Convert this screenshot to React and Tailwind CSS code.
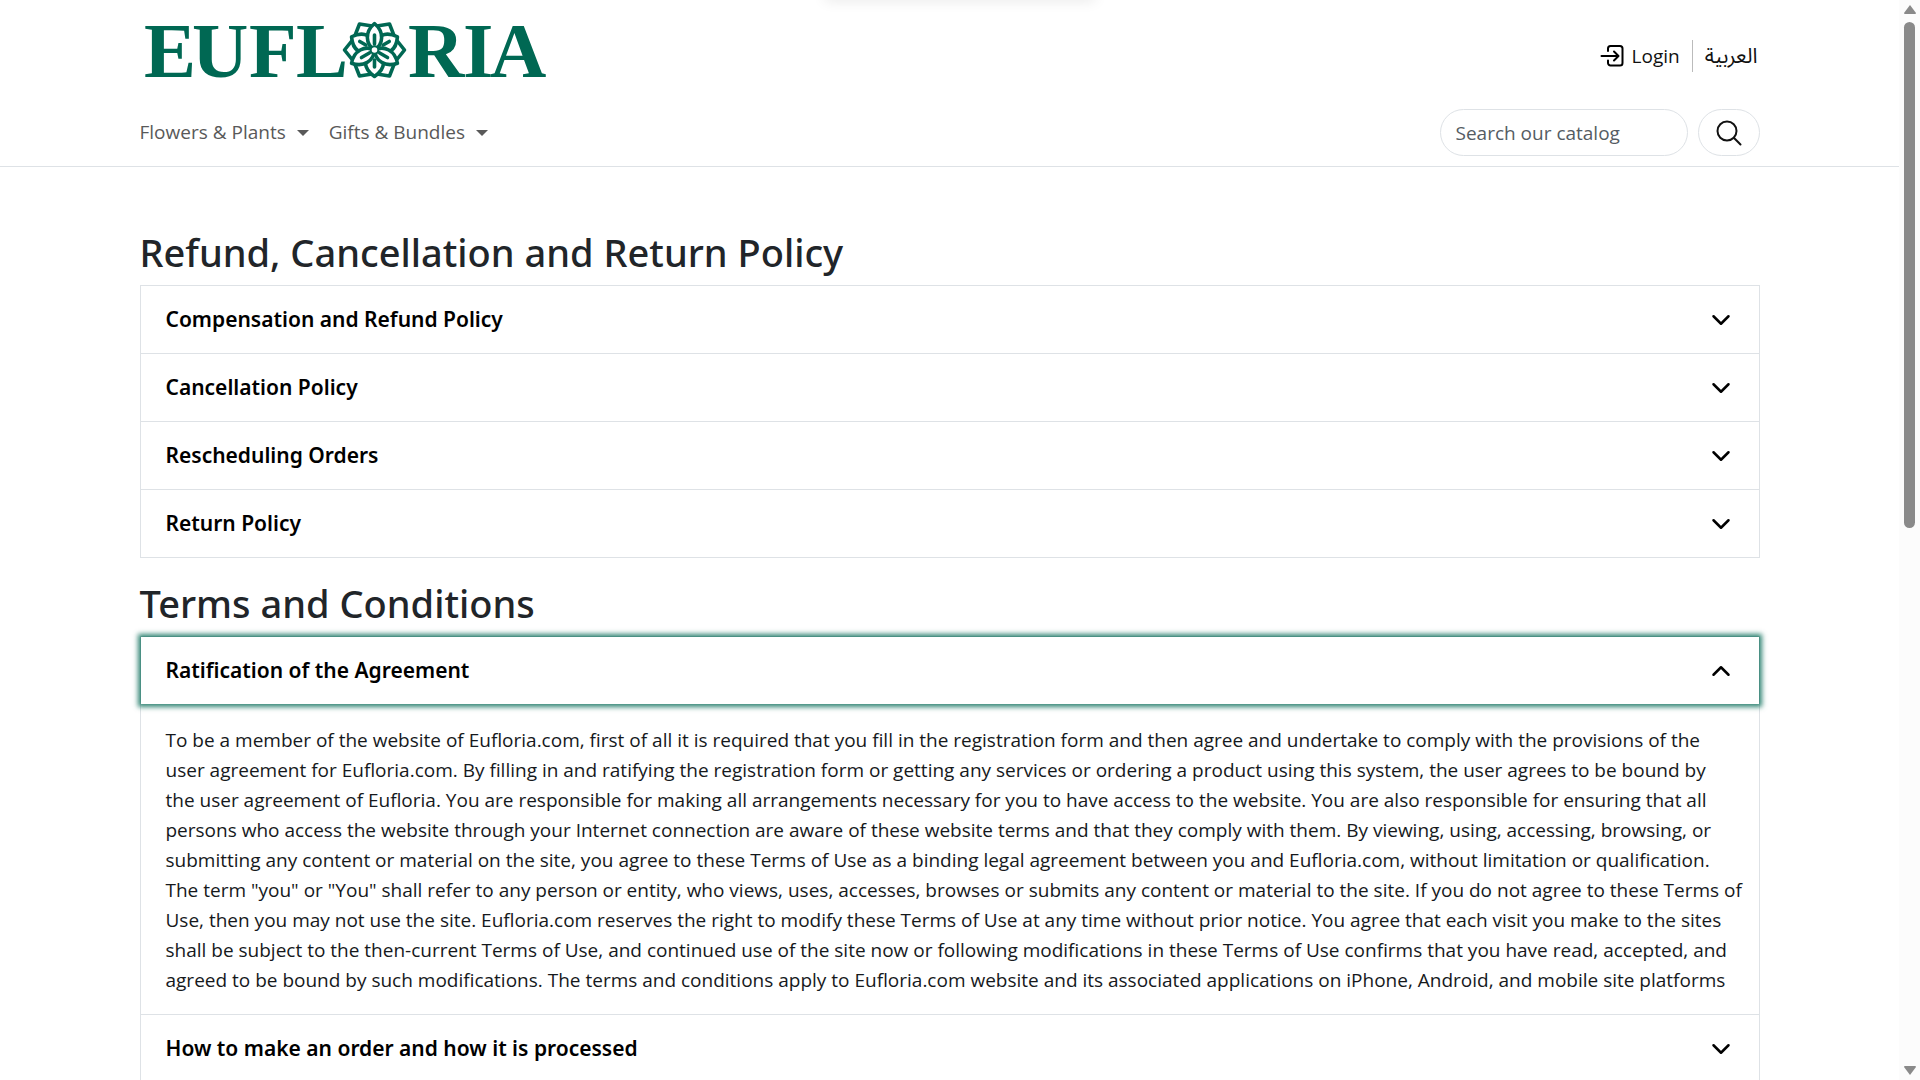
import { useState } from "react";

const refundItems = [
  "Compensation and Refund Policy",
  "Cancellation Policy",
  "Rescheduling Orders",
  "Return Policy",
];

const agreementLines = [
  "To be a member of the website of Eufloria.com, first of all it is required that you fill in the registration form and then agree and undertake to comply with the provisions of the",
  "user agreement for Eufloria.com. By filling in and ratifying the registration form or getting any services or ordering a product using this system, the user agrees to be bound by",
  "the user agreement of Eufloria. You are responsible for making all arrangements necessary for you to have access to the website. You are also responsible for ensuring that all",
  "persons who access the website through your Internet connection are aware of these website terms and that they comply with them. By viewing, using, accessing, browsing, or",
  "submitting any content or material on the site, you agree to these Terms of Use as a binding legal agreement between you and Eufloria.com, without limitation or qualification.",
  'The term "you" or "You" shall refer to any person or entity, who views, uses, accesses, browses or submits any content or material to the site. If you do not agree to these Terms of',
  "Use, then you may not use the site. Eufloria.com reserves the right to modify these Terms of Use at any time without prior notice. You agree that each visit you make to the sites",
  "shall be subject to the then-current Terms of Use, and continued use of the site now or following modifications in these Terms of Use confirms that you have read, accepted, and",
  "agreed to be bound by such modifications. The terms and conditions apply to Eufloria.com website and its associated applications on iPhone, Android, and mobile site platforms",
];

function Flower() {
  return (
    <g transform="translate(234.5 38)" stroke="#006853" strokeWidth="3.6" strokeLinejoin="round" strokeLinecap="round" fill="#fff">
      {[0, 60, 120, 180, 240, 300].map((a) => (
        <path key={a} transform={`rotate(${a})`} d="M30 0L22 -10Q16 -6 13 0Q16 6 22 10Z" />
      ))}
      {[90, 210, 330].map((a) => (
        <g key={a} transform={`rotate(${a})`}>
          <path d="M0 0C8 -13 19 -11 26.500 0C19 11 8 13 0 0Z" />
          <path d="M10 0H17" />
        </g>
      ))}
      {[30, 150, 270].map((a) => (
        <g key={a} transform={`rotate(${a})`}>
          <path d="M0 0C6 -9 18 -10 26.500 0C18 10 6 9 0 0Z" />
          <path d="M6 0H15" />
        </g>
      ))}
      <circle r="3.800" strokeWidth="2" />
    </g>
  );
}

function Logo() {
  return (
    <svg viewBox="0 0 406 88" className="h-[88px] w-[406px]" role="img" aria-label="Eufloria">
      <g fill="#006853" fontFamily="'Liberation Serif', serif" fontSize="78" fontWeight="700">
        <text x="4 52 109 156" y="65">EUFL</text>
        <text x="268 323 350" y="65">RIA</text>
      </g>
      <Flower />
    </svg>
  );
}

function Chevron({ open }) {
  return (
    <svg viewBox="0 0 16 16" className={open ? "size-5 rotate-180" : "size-5"} fill="none" stroke="#000" strokeWidth="2" strokeLinecap="round" strokeLinejoin="round" aria-hidden="true">
      <path d="m2 5 6 6 6-6" />
    </svg>
  );
}

function NavMenu({ label }) {
  return (
    <button type="button" className="flex items-center gap-[11px] text-[#595959]">
      {label}
      <svg viewBox="0 0 12 6" className="h-[6px] w-[12px]" fill="currentColor" aria-hidden="true">
        <path d="M0 0H12L6 6Z" />
      </svg>
    </button>
  );
}

function Item({ title, open, focused, onToggle, children }) {
  return (
    <div className="border border-t-0 border-[#dee2e6] first:border-t">
      <h3>
        <button
          type="button"
          aria-expanded={open}
          onClick={onToggle}
          className={
            "flex h-[67px] w-full items-center justify-between bg-white pr-7 pl-[25px] text-left font-['Noto_Sans',sans-serif] text-[21px] font-semibold text-black outline-none" +
            (focused ? " relative shadow-[0_0_5px_3px_#006853cc]" : "")
          }
        >
          {title}
          <Chevron open={open} />
        </button>
      </h3>
      {open && children}
    </div>
  );
}

function Agreement() {
  return (
    <p className="pt-[21px] pb-[19px] pl-[25px] leading-[30px] text-[#16191c]">
      {agreementLines.map((line) => (
        <span key={line} className="block">{line}</span>
      ))}
    </p>
  );
}

function Heading({ children }) {
  return (
    <h2 className="mb-[10px] font-['Noto_Sans',sans-serif] text-[38px] leading-[46px] font-medium text-[#212529]">{children}</h2>
  );
}

export default function App() {
  const [opened, setOpened] = useState("Ratification of the Agreement");
  const toggle = (title) => setOpened(opened === title ? "" : title);

  return (
    <div className="flex h-screen overflow-hidden bg-white font-['Open_Sans',sans-serif] text-[19px]">
      <div className="relative min-w-0 flex-1 overflow-hidden">
        <div className="absolute -top-2 left-1/2 ml-[10px] h-2 w-[270px] -translate-x-1/2 shadow-[0_0_14px_rgba(0,0,0,0.12)]" />
        <header className="border-b border-[#dee2e6]">
          <div className="mx-auto max-w-[1652px] px-4 pt-3 pb-[10px]">
            <div className="flex items-center justify-between">
              <a href="#home"><Logo /></a>
              <div className="flex items-center text-[#111]">
                <a href="#login" className="flex items-center gap-2">
                  <svg viewBox="0 0 24 24" className="size-6" fill="none" stroke="#000" strokeWidth="2" strokeLinecap="round" strokeLinejoin="round" aria-hidden="true">
                    <path d="M8 7V4.500A2.500 2.500 0 0 1 10.500 2H20A2.500 2.500 0 0 1 22.500 4.500V19A2.500 2.500 0 0 1 20 21.500H10.500A2.500 2.500 0 0 1 8 19V16.500" />
                    <path d="M1.500 12H18M14 7.500L18.500 12L14 16.500" />
                  </svg>
                  Login
                </a>
                <span className="mr-3 ml-3 h-8 w-px bg-[#bbb]" />
                <a href="#ar" lang="ar" dir="rtl" className="pr-0.5 font-['Open_Sans','Noto_Sans_Arabic','DejaVu_Sans',sans-serif] text-[21px]">العربية</a>
              </div>
            </div>
            <div className="mt-[9px] flex items-center justify-between">
              <nav className="flex gap-5">
                <NavMenu label="Flowers & Plants" />
                <NavMenu label="Gifts & Bundles" />
              </nav>
              <form className="flex gap-[10px]" onSubmit={(e) => e.preventDefault()}>
                <input
                  type="search"
                  aria-label="Search our catalog"
                  placeholder="Search our catalog"
                  className="h-[47px] w-[248px] rounded-full border border-[#dee2e6] px-[15px] outline-none placeholder:text-[#555c63]"
                />
                <button type="submit" aria-label="Search" className="flex h-[47px] w-[62px] items-center justify-center rounded-full border border-[#dee2e6]">
                  <svg viewBox="0 0 26 26" className="size-[26px]" fill="none" stroke="#111" strokeWidth="2" strokeLinecap="round" aria-hidden="true">
                    <circle cx="11" cy="11" r="9.500" />
                    <path d="M17.800 17.800L24.500 24.500" />
                  </svg>
                </button>
              </form>
            </div>
          </div>
        </header>
        <main className="mx-auto max-w-[1652px] px-4 pt-[62px]">
          <section>
            <Heading>Refund, Cancellation and Return Policy</Heading>
            <div>
              {refundItems.map((title) => (
                <Item key={title} title={title} open={false} />
              ))}
            </div>
          </section>
          <section className="mt-[22px]">
            <Heading>Terms and Conditions</Heading>
            <div>
              {["Ratification of the Agreement", "How to make an order and how it is processed"].map((title, i) => (
                <Item key={title} title={title} open={opened === title} focused={i === 0} onToggle={() => toggle(title)}>
                  <Agreement />
                </Item>
              ))}
            </div>
          </section>
        </main>
      </div>
      <div className="flex w-[21px] flex-col items-center bg-[#fcfcfc] pt-[5px] pb-[5px]" aria-hidden="true">
        <svg viewBox="0 0 12 9" className="h-[9px] w-[12px]" fill="#8a8a8a"><path d="M6 0L12 8Q12 9 11 9H1Q0 9 0 8Z" /></svg>
        <div className="mt-2 flex w-[11px] flex-1 flex-col">
          <div className="h-[485px] max-h-full flex-[0_0_48.5%] rounded-full bg-[#8a8a8a]" />
        </div>
        <svg viewBox="0 0 12 9" className="h-[9px] w-[12px]" fill="#8a8a8a"><path d="M6 9L12 1Q12 0 11 0H1Q0 0 0 1Z" /></svg>
      </div>
    </div>
  );
}
